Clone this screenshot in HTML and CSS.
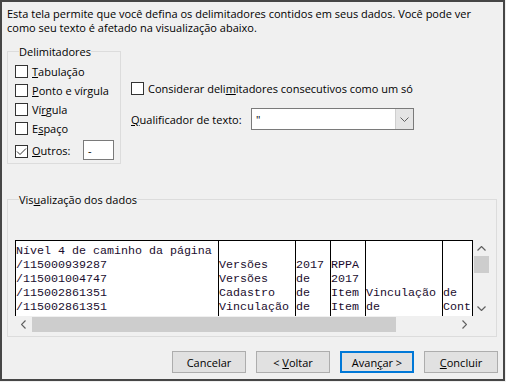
FILE: index.html
```html
<!DOCTYPE html>
<html lang="pt">
<head>
  <meta charset="UTF-8" />
  <title>Assistente de importação de texto</title>
  <link rel="stylesheet" href="styles.css">
</head>
<body>
  <div class="dialog">
    <p class="intro">Esta tela permite que você defina os delimitadores contidos em seus dados. Você pode ver<br>como seu texto é afetado na visualização abaixo.</p>

    <div class="options">
      <div class="group delims">
        <div class="group-title">Delimitadores</div>
        <div class="checks">
          <div class="check"><span class="box"></span><span><u>T</u>abulação</span></div>
          <div class="check"><span class="box"></span><span><u>P</u>onto e vírgula</span></div>
          <div class="check"><span class="box"></span><span>Ví<u>r</u>gula</span></div>
          <div class="check"><span class="box"></span><span>E<u>s</u>paço</span></div>
          <div class="check other">
            <span class="box"><svg width="11" height="11" viewBox="0 0 11 11"><polyline points="1,5.5 4,8.5 10,2.5" fill="none" stroke="#333" stroke-width="1"/></svg></span>
            <span><u>O</u>utros:</span>
            <span class="field">-</span>
          </div>
        </div>
      </div>

      <div class="side">
        <div class="check single"><span class="box"></span><span>Considerar deli<u>m</u>itadores consecutivos como um só</span></div>
        <div class="qualifier">
          <span class="qualifier-label"><u>Q</u>ualificador de texto:</span>
          <div class="select">
            <span class="select-value">"</span>
            <span class="select-arrow"><svg width="9" height="5" viewBox="0 0 9 5"><polyline points="0.5,0.5 4.5,4.5 8.5,0.5" fill="none" stroke="#606060" stroke-width="1"/></svg></span>
          </div>
        </div>
      </div>
    </div>

    <div class="group preview">
      <div class="group-title">Vis<u>u</u>alização dos dados</div>
      <div class="data">
        <div class="table">
          <div class="col c1">Nível 4 de caminho da página<br>/115000939287<br>/115001004747<br>/115002861351<br>/115002861351</div>
          <div class="col c2"><br>Versões<br>Versões<br>Cadastro<br>Vinculação</div>
          <div class="col c3"><br>2017<br>de<br>de<br>de</div>
          <div class="col c4"><br>RPPA<br>2017<br>Item<br>Item</div>
          <div class="col c5"><br><br><br>Vinculação<br>de</div>
          <div class="col c6"><br><br><br>de<br>Cont</div>
          <div class="col c7"></div>
        </div>
        <div class="vscroll">
          <span class="arrow-v"><svg width="9" height="5" viewBox="0 0 9 5"><polyline points="0.5,4.5 4.5,0.5 8.5,4.5" fill="none" stroke="#606060" stroke-width="1.2"/></svg></span>
          <span class="thumb-v"></span>
          <span class="spacer"></span>
          <span class="arrow-v"><svg width="9" height="5" viewBox="0 0 9 5"><polyline points="0.5,0.5 4.5,4.5 8.5,0.5" fill="none" stroke="#606060" stroke-width="1.2"/></svg></span>
        </div>
        <div class="hscroll">
          <span class="arrow-h"><svg width="5" height="9" viewBox="0 0 5 9"><polyline points="4.5,0.5 0.5,4.5 4.5,8.5" fill="none" stroke="#606060" stroke-width="1.2"/></svg></span>
          <span class="thumb-h"></span>
          <span class="spacer"></span>
          <span class="arrow-h"><svg width="5" height="9" viewBox="0 0 5 9"><polyline points="0.5,0.5 4.5,4.5 0.5,8.5" fill="none" stroke="#606060" stroke-width="1.2"/></svg></span>
        </div>
        <div class="corner"></div>
      </div>
    </div>

    <div class="buttons">
      <span class="btn">Cancelar</span>
      <span class="btn">&lt; <u>V</u>oltar</span>
      <span class="btn default">Avan<u>ç</u>ar &gt;</span>
      <span class="btn"><u>C</u>oncluir</span>
    </div>
  </div>
</body>
</html>
```

FILE: styles.css
```css
body {
  margin: 0;
  background: #f0f0f0;
  font-family: "Open Sans", "Liberation Sans", sans-serif;
  font-size: 11px;
  line-height: 13px;
  color: #000;
}
.dialog {
  width: 505px;
  height: 381px;
  box-sizing: border-box;
  border: 2px solid #464646;
  padding: 5px 5px 0 5px;
}
.intro {
  margin: 0;
  line-height: 14px;
}

.options {
  display: flex;
  margin-top: 16px;
}
.group {
  border: 1px solid #dcdcdc;
  box-sizing: border-box;
}
.group-title {
  display: table;
  margin: -7px 0 0 4px;
  background: #f0f0f0;
}
.delims {
  width: 114px;
  height: 113px;
  padding: 0 6px 0 7px;
}
.checks { margin-top: 4px; }
.check {
  display: flex;
  align-items: center;
  gap: 4px;
  height: 19px;
}
.box {
  width: 13px;
  height: 13px;
  box-sizing: border-box;
  border: 1px solid #333;
  background: #fff;
  flex: none;
}
.box svg { display: block; }
.check.other {
  height: 20px;
  margin-top: 2px;
}
.other .box { margin-top: 3px; }
.field {
  margin-left: auto;
  width: 31px;
  height: 20px;
  box-sizing: border-box;
  border: 1px solid #7a7a7a;
  background: #fff;
  padding: 3px 0 0 4px;
}

.side {
  margin-left: 10px;
  padding-top: 31px;
}
.check.single { height: 13px; }
.qualifier {
  display: flex;
  align-items: center;
  margin-top: 13px;
}
.qualifier-label { width: 120px; }
.select {
  display: flex;
  width: 163px;
  height: 22px;
  box-sizing: border-box;
  border: 1px solid #7a7a7a;
  background: #fff;
}
.select-value {
  flex: 1;
  padding: 4px 0 0 4px;
}
.select-arrow {
  width: 17px;
  background: #e5e5e5;
  border-left: 1px solid #cfcfcf;
  display: flex;
  align-items: center;
  justify-content: center;
}

.preview {
  margin-top: 35px;
  width: 490px;
  height: 138px;
  padding-left: 7px;
}
.data {
  margin-top: 34px;
  display: grid;
  grid-template-columns: 458px 17px;
  grid-template-rows: 76px 17px;
}
.table {
  display: flex;
  overflow: hidden;
  background: #fff;
  border-top: 1px solid #000;
  font-family: "Liberation Mono", "Courier New", monospace;
  font-size: 11.67px;
  line-height: 14px;
  color: #1a0d2e;
}
.col {
  flex: none;
  box-sizing: border-box;
  border-left: 1px solid #000;
  padding-top: 3px;
  white-space: pre;
  overflow: hidden;
}
.c1 { width: 203px; }
.c2 { width: 77px; }
.c3 { width: 35px; }
.c4 { width: 35px; }
.c5 { width: 77px; }
.c6 { width: 30px; }
.c7 { width: 10px; }

.vscroll, .hscroll {
  display: flex;
  background: #f0f0f0;
}
.vscroll { flex-direction: column; }
.spacer { flex: 1; }
.arrow-v {
  height: 16px;
  display: flex;
  align-items: center;
  justify-content: center;
}
.arrow-v svg, .arrow-h svg { display: block; }
.thumb-v {
  height: 17px;
  margin: 0 1px;
  background: #cdcdcd;
}
.arrow-h {
  width: 17px;
  display: flex;
  align-items: center;
  justify-content: center;
}
.thumb-h {
  width: 364px;
  margin: 1px 0;
  background: #cdcdcd;
}
.corner { background: #f0f0f0; }

.buttons {
  display: flex;
  justify-content: flex-end;
  gap: 10px;
  margin-top: 14px;
}
.btn {
  width: 74px;
  height: 22px;
  box-sizing: border-box;
  border: 1px solid #adadad;
  background: #e1e1e1;
  display: flex;
  align-items: center;
  justify-content: center;
  white-space: pre;
}
.btn.default { border: 2px solid #0078d7; }
```
